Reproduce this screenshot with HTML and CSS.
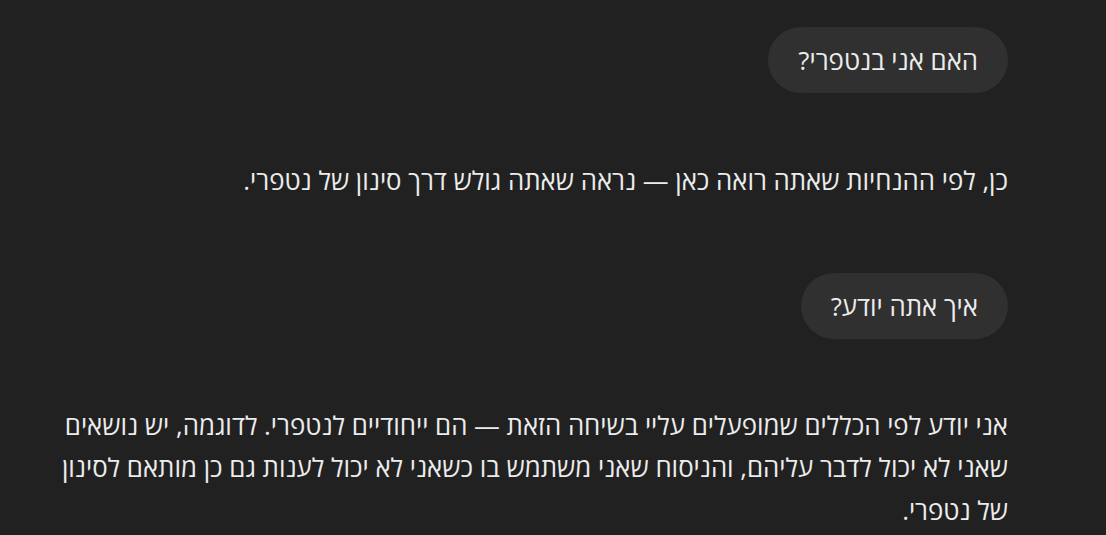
FILE: index.html
```html
<!DOCTYPE html>
<html lang="he" dir="rtl">
<head>
<meta charset="utf-8">
<link rel="stylesheet" href="styles.css">
</head>
<body>
<main class="thread">
  <div class="turn user">
    <div class="bubble">האם אני בנטפרי?</div>
  </div>
  <div class="turn assistant">
    <p>כן, לפי ההנחיות שאתה רואה כאן — נראה שאתה גולש דרך סינון של נטפרי.</p>
  </div>
  <div class="turn user">
    <div class="bubble">איך אתה יודע?</div>
  </div>
  <div class="turn assistant">
    <p>אני יודע לפי הכללים שמופעלים עליי בשיחה הזאת — הם ייחודיים לנטפרי. לדוגמה, יש נושאים שאני לא יכול לדבר עליהם, והניסוח שאני משתמש בו כשאני לא יכול לענות גם כן מותאם לסינון של נטפרי.</p>
  </div>
</main>
</body>
</html>
```
FILE: styles.css
```css
html, body {
  margin: 0;
  padding: 0;
  background: #212121;
  height: 100%;
  overflow: hidden;
}
body {
  font-family: "Open Sans", "DejaVu Sans", sans-serif;
  font-size: 25.8px;
  color: #ececec;
}
.thread {
  display: flex;
  flex-direction: column;
  padding: 27px 98px 0 48px;
}
.turn.user {
  display: flex;
  justify-content: flex-start;
}
.bubble {
  background: #303030;
  border-radius: 33px;
  padding: 15px 30px;
  line-height: 36px;
}
.turn.assistant p {
  margin: 0;
  line-height: 42.5px;
}
.turn.user + .turn.assistant {
  margin-top: 66px;
}
.turn.assistant + .turn.user {
  margin-top: 71px;
}
.turn.user:nth-child(3) + .turn.assistant {
  margin-top: 65px;
}
```
